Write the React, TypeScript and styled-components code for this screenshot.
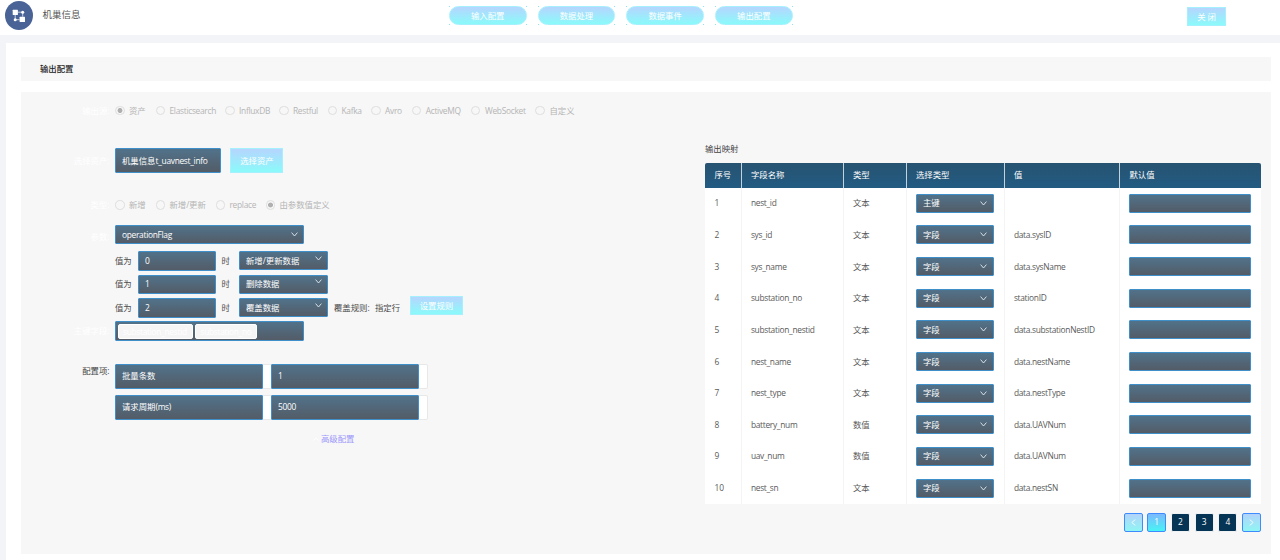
import React from 'react';
import styled, { createGlobalStyle, css } from 'styled-components';

const GlobalStyle = createGlobalStyle`
  *, *::before, *::after { box-sizing: border-box; }
  html { background: #f3f4f7; }
  body {
    margin: 0;
    width: 1280px;
    height: 560px;
    overflow: hidden;
    background: #f3f4f7;
    color: #4c4c4c;
    font-family: "Open Sans", "Noto Sans CJK SC", sans-serif;
    font-size: 8.4px;
    line-height: 12px;
  }
`;

const aqua = css`
  border: 1px solid #a4f1fd;
  background: linear-gradient(180deg, #b6d5fe 0%, #8afafa 100%);
  color: #fff;
`;

const steel = css`
  border: 1px solid #3f8fcb;
  border-radius: 1px;
  background: linear-gradient(180deg, #51728a 0%, #535c67 100%);
  color: #fff;
`;

const TopBar = styled.header`
  display: flex;
  align-items: flex-start;
  height: 35px;
  padding: 1px 54px 0 5px;
  background: #fff;
`;

const Avatar = styled.div`
  display: flex;
  align-items: center;
  justify-content: center;
  width: 28px;
  height: 29px;
  border-radius: 50%;
  background: #4a6396;
`;

const AppName = styled.h1`
  width: 406.5px;
  margin: 7px 0 0 9.5px;
  font-size: 9.5px;
  font-weight: 400;
  line-height: 13px;
  color: #555;
`;

const Steps = styled.nav`
  display: flex;
  gap: 11.2px;
  margin-top: 5px;
`;

const Corner = styled.div`
  width: 77.5px;
  height: 19px;
  background:
    linear-gradient(#8ce4f8, #8ce4f8) 0 0 / 1px 1px no-repeat,
    linear-gradient(#8ce4f8, #8ce4f8) 100% 0 / 1px 1px no-repeat,
    linear-gradient(#8ce4f8, #8ce4f8) 0 100% / 1px 1px no-repeat,
    linear-gradient(#8ce4f8, #8ce4f8) 100% 100% / 1px 1px no-repeat;
`;

const StepButton = styled.button`
  ${aqua}
  display: block;
  width: 100%;
  height: 100%;
  padding: 0;
  border-radius: 10px;
  font: inherit;
`;

const ActionButton = styled.button<{ $w: number; $h: number; $spaced?: boolean }>`
  ${aqua}
  flex: none;
  width: ${(p) => p.$w}px;
  height: ${(p) => p.$h}px;
  padding: 0;
  font: inherit;
  letter-spacing: ${(p) => (p.$spaced ? '2px' : '0')};
  text-indent: ${(p) => (p.$spaced ? '2px' : '0')};
`;

const CloseSlot = styled.div`
  display: flex;
  margin: 6px 0 0 auto;
`;

const Page = styled.main`
  height: 517px;
  margin: 8px 0 0 6px;
  padding: 14px 9px 0 15px;
  background: #fff;
`;

const SectionTitle = styled.h2`
  display: flex;
  align-items: center;
  height: 24px;
  margin: 0;
  padding-left: 19px;
  background: #f7f7f7;
  font-size: 8.4px;
  font-weight: 500;
  color: #222;
`;

const Panel = styled.section`
  display: flex;
  justify-content: space-between;
  height: 462px;
  margin-top: 11px;
  padding-right: 10px;
  background: #f7f7f7;
`;

const Form = styled.div`
  display: flex;
  flex-direction: column;
  width: 460px;
`;

const Field = styled.div<{ $top: number; $h: number }>`
  display: flex;
  align-items: center;
  height: ${(p) => p.$h}px;
  margin-top: ${(p) => p.$top}px;
`;

const Label = styled.label<{ $dark?: boolean; $down?: number; $up?: number }>`
  flex: none;
  width: 94px;
  padding: ${(p) => p.$down ?? 0}px 5.5px ${(p) => p.$up ?? 0}px 0;
  text-align: right;
  white-space: nowrap;
  color: ${(p) => (p.$dark ? '#444' : '#fff')};
`;

const RadioItem = styled.span<{ $w: number }>`
  display: flex;
  align-items: center;
  flex: none;
  gap: 4.5px;
  width: ${(p) => p.$w}px;
  white-space: nowrap;
  color: #b5b5b5;
`;

const RadioDot = styled.i<{ $on?: boolean }>`
  flex: none;
  width: 9.5px;
  height: 9.5px;
  border: 1px solid #dedede;
  border-radius: 50%;
  background: ${(p) => (p.$on ? 'radial-gradient(circle, #b0b0b0 0 2.1px, #f7f7f7 2.8px)' : '#f7f7f7')};
`;

const TextBox = styled.div<{ $w: number; $h: number }>`
  ${steel}
  display: flex;
  align-items: center;
  flex: none;
  width: ${(p) => p.$w}px;
  height: ${(p) => p.$h}px;
  padding: 0 6px;
  white-space: nowrap;
`;

const SelectBox = styled(TextBox)<{ $raise?: boolean }>`
  justify-content: space-between;
  padding-right: 5.5px;
  svg { margin-top: ${(p) => (p.$raise ? -5 : 0)}px; }
`;

const Word = styled.span<{ $w: number }>`
  flex: none;
  width: ${(p) => p.$w}px;
  white-space: nowrap;
`;

const Spacer = styled.span<{ $w: number }>`
  flex: none;
  width: ${(p) => p.$w}px;
`;

const TagBox = styled(TextBox)`
  gap: 2.5px;
  padding: 0 1.5px;
`;

const Tag = styled.span<{ $w: number }>`
  flex: none;
  width: ${(p) => p.$w}px;
  height: 15px;
  padding-left: 4.5px;
  border: 1px solid #fff;
  border-radius: 2px;
  background: #f5f5f5;
  line-height: 14px;
  color: #fff;
`;

const PairGroup = styled.div`
  display: flex;
  justify-content: space-between;
  width: 313px;
  height: 25px;
  padding-right: 8px;
  border: solid #e8e8e8;
  border-width: 1px 1px 1px 0;
  border-radius: 2px;
  background: #fff;
  > div { margin-top: -1px; }
`;

const Advanced = styled.a`
  display: flex;
  align-items: center;
  gap: 2px;
  margin: 13px 0 0 292px;
  color: #9d97fb;
`;

const Mapping = styled.div`
  width: 556px;
  padding-top: 51px;
`;

const MappingTitle = styled.div`
  height: 19.5px;
  color: #444;
`;

const Table = styled.div`
  border-radius: 2px 2px 0 0;
  overflow: hidden;
`;

const columns = css`
  display: grid;
  grid-template-columns: 36.5px 102px 63px 98px 115.5px 1fr;
`;

const HeadRow = styled.div`
  ${columns}
  height: 25px;
  background: linear-gradient(180deg, #275371, #225b82);
  color: #fff;
`;

const BodyRow = styled.div`
  ${columns}
  height: 31.65px;
  background: #fff;
  color: #5a5a5a;
`;

const Cell = styled.div<{ $head?: boolean }>`
  display: flex;
  align-items: center;
  padding-left: 9.4px;
  border-right: 1px solid ${(p) => (p.$head ? '#c4d2dc' : '#f4f4f4')};
  white-space: nowrap;
  &:last-child { border-right: 0; }
`;

const Latin = styled.span`
  letter-spacing: -0.3px;
`;

const Pager = styled.div`
  display: flex;
  justify-content: flex-end;
  gap: 4.7px;
  margin-top: 9px;
`;

const PageButton = styled.button<{ $kind: 'arrow' | 'active' | 'plain' }>`
  display: flex;
  align-items: center;
  justify-content: center;
  width: 19px;
  height: 19px;
  padding: 0;
  border: 1px solid ${(p) => (p.$kind === 'plain' ? '#f0f3f5' : '#3d8bfd')};
  border-radius: 2px;
  background: ${(p) =>
    p.$kind === 'plain'
      ? '#063454'
      : p.$kind === 'active'
        ? 'linear-gradient(180deg, #7db9fd, #47f3f5)'
        : 'linear-gradient(180deg, #b3d3fb, #8ff5f3)'};
  color: #fff;
  font: inherit;
`;

const Chevron = () => (
  <svg width="7" height="5" viewBox="0 0 7 5" fill="none" stroke="#e6ecf0" strokeWidth="0.9">
    <path d="M0.6 0.6 3.5 4 6.4 0.6" />
  </svg>
);

const Arrow = ({ flip }: { flip?: boolean }) => (
  <svg width="5" height="7" viewBox="0 0 5 7" fill="none" stroke="#fff" strokeWidth="0.8">
    <path d={flip ? 'M0.7 0.6 4.2 3.5 0.7 6.4' : 'M4.3 0.6 0.8 3.5 4.3 6.4'} />
  </svg>
);

const FlowIcon = () => (
  <svg width="14" height="14" viewBox="0 0 14 14" fill="#fff">
    <rect x="0.7" y="0.8" width="5.2" height="5.2" rx="0.5" />
    <rect x="7.6" y="7.8" width="5.4" height="5.2" rx="0.5" />
    <circle cx="10.7" cy="3.2" r="1.5" />
    <circle cx="3.2" cy="10.7" r="1.5" />
    <path d="M6 3.2h4.7v4.5M3.2 6v4.7h4.5" fill="none" stroke="#fff" strokeWidth="0.7" />
  </svg>
);

// Tightens the Latin runs of a mixed string and leaves the Chinese ones alone.
const Mixed = ({ text }: { text: string }) => (
  <span>
    {text
      .split(/([\x20-\x7e]+)/)
      .filter(Boolean)
      .map((run, i) => (/^[\x20-\x7e]/.test(run) ? <Latin key={i}>{run}</Latin> : run))}
  </span>
);

interface Option {
  text: string;
  w: number;
  on?: boolean;
}

const targets: Option[] = [
  { text: '资产', w: 40.5, on: true },
  { text: 'Elasticsearch', w: 69.5 },
  { text: 'InfluxDB', w: 54 },
  { text: 'Restful', w: 48.5 },
  { text: 'Kafka', w: 43.5 },
  { text: 'Avro', w: 40.7 },
  { text: 'ActiveMQ', w: 59.3 },
  { text: 'WebSocket', w: 64.5 },
  { text: '自定义', w: 45 },
];

const modes: Option[] = [
  { text: '新增', w: 40.5 },
  { text: '新增/更新', w: 60 },
  { text: 'replace', w: 50 },
  { text: '由参数值定义', w: 70, on: true },
];

const Radios = ({ items }: { items: Option[] }) => (
  <>
    {items.map((o) => (
      <RadioItem key={o.text} $w={o.w}>
        <RadioDot $on={o.on} />
        <Mixed text={o.text} />
      </RadioItem>
    ))}
  </>
);

const rules = [
  ['0', '新增/更新数据'],
  ['1', '删除数据'],
  ['2', '覆盖数据'],
];

const rows = [
  ['nest_id', '文本', '主键', ''],
  ['sys_id', '文本', '字段', 'data.sysID'],
  ['sys_name', '文本', '字段', 'data.sysName'],
  ['substation_no', '文本', '字段', 'stationID'],
  ['substation_nestid', '文本', '字段', 'data.substationNestID'],
  ['nest_name', '文本', '字段', 'data.nestName'],
  ['nest_type', '文本', '字段', 'data.nestType'],
  ['battery_num', '数值', '字段', 'data.UAVNum'],
  ['uav_num', '数值', '字段', 'data.UAVNum'],
  ['nest_sn', '文本', '字段', 'data.nestSN'],
];

export default function App() {
  return (
    <>
      <GlobalStyle />
      <TopBar>
        <Avatar>
          <FlowIcon />
        </Avatar>
        <AppName>机巢信息</AppName>
        <Steps>
          {['输入配置', '数据处理', '数据事件', '输出配置'].map((s) => (
            <Corner key={s}>
              <StepButton>{s}</StepButton>
            </Corner>
          ))}
        </Steps>
        <CloseSlot>
          <ActionButton $w={39} $h={19} $spaced>
            关闭
          </ActionButton>
        </CloseSlot>
      </TopBar>
      <Page>
        <SectionTitle>输出配置</SectionTitle>
        <Panel>
          <Form>
            <Field $top={8} $h={21}>
              <Label>输出源:</Label>
              <Radios items={targets} />
            </Field>
            <Field $top={27} $h={25}>
              <Label>选择资产:</Label>
              <TextBox $w={106.4} $h={25}>
                <Mixed text="机巢信息t_uavnest_info" />
              </TextBox>
              <Spacer $w={9} />
              <ActionButton $w={53} $h={25}>选择资产</ActionButton>
            </Field>
            <Field $top={22} $h={20}>
              <Label>类型:</Label>
              <Radios items={modes} />
            </Field>
            <Field $top={10} $h={19}>
              <Label $down={4}>参数:</Label>
              <SelectBox $w={189.4} $h={19}>
                <Mixed text="operationFlag" />
                <Chevron />
              </SelectBox>
            </Field>
            {rules.map(([value, action], i) => (
              <Field key={value} $top={i === 0 ? 7 : 4} $h={19.5}>
                <Spacer $w={94} />
                <Word $w={23}>值为</Word>
                <TextBox $w={78} $h={19.5}>{value}</TextBox>
                <Spacer $w={5.5} />
                <Word $w={17.5}>时</Word>
                <SelectBox $w={89} $h={19} $raise>
                  {action}
                  <Chevron />
                </SelectBox>
                {i === 2 && (
                  <>
                    <Spacer $w={6} />
                    <Word $w={41}>覆盖规则:</Word>
                    <Word $w={35}>指定行</Word>
                    <Field $top={-4} $h={19}>
                      <ActionButton $w={53} $h={19}>设置规则</ActionButton>
                    </Field>
                  </>
                )}
              </Field>
            ))}
            <Field $top={3.5} $h={20}>
              <Label>主键字段:</Label>
              <TagBox $w={189.4} $h={20}>
                <Tag $w={75}><Mixed text="substation_nestid" /></Tag>
                <Tag $w={62}><Mixed text="substation_no" /></Tag>
              </TagBox>
            </Field>
            <Field $top={22.6} $h={25}>
              <Label $dark $up={11}>配置项:</Label>
              <PairGroup>
                <TextBox $w={148.4} $h={25}>批量条数</TextBox>
                <TextBox $w={148} $h={25}>1</TextBox>
              </PairGroup>
            </Field>
            <Field $top={6} $h={25}>
              <Spacer $w={94} />
              <PairGroup>
                <TextBox $w={148.4} $h={25}>
                  <Mixed text="请求周期(ms)" />
                </TextBox>
                <TextBox $w={148} $h={25}>
                  <Mixed text="5000" />
                </TextBox>
              </PairGroup>
            </Field>
            <Advanced>
              <svg width="6" height="4" viewBox="0 0 6 4" fill="none" stroke="#fff" strokeWidth="0.8">
                <path d="M0.6 3.5 3 0.8 5.4 3.5" />
              </svg>
              高级配置
            </Advanced>
          </Form>
          <Mapping>
            <MappingTitle>输出映射</MappingTitle>
            <Table>
              <HeadRow>
                {['序号', '字段名称', '类型', '选择类型', '值', '默认值'].map((h) => (
                  <Cell key={h} $head>{h}</Cell>
                ))}
              </HeadRow>
              {rows.map(([name, type, pick, value], i) => (
                <BodyRow key={name}>
                  <Cell>{i + 1}</Cell>
                  <Cell><Mixed text={name} /></Cell>
                  <Cell>{type}</Cell>
                  <Cell>
                    <SelectBox $w={78} $h={19}>
                      {pick}
                      <Chevron />
                    </SelectBox>
                  </Cell>
                  <Cell><Mixed text={value} /></Cell>
                  <Cell>
                    <TextBox $w={122} $h={19} />
                  </Cell>
                </BodyRow>
              ))}
            </Table>
            <Pager>
              <PageButton $kind="arrow"><Arrow /></PageButton>
              <PageButton $kind="active">1</PageButton>
              <PageButton $kind="plain">2</PageButton>
              <PageButton $kind="plain">3</PageButton>
              <PageButton $kind="plain">4</PageButton>
              <PageButton $kind="arrow"><Arrow flip /></PageButton>
            </Pager>
          </Mapping>
        </Panel>
      </Page>
    </>
  );
}
